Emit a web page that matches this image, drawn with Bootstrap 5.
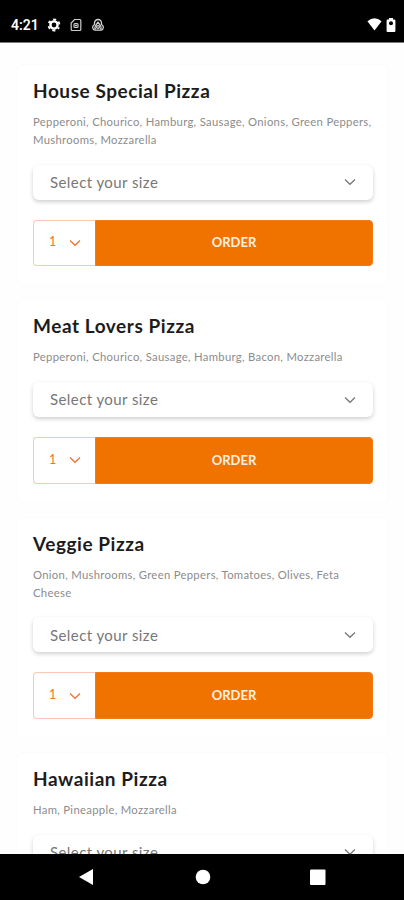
<!DOCTYPE html>
<html lang="en">
<head>
<meta charset="utf-8">
<meta name="viewport" content="width=device-width, initial-scale=1">
<title>Pizza menu</title>
<link href="https://cdn.jsdelivr.net/npm/bootstrap@5.3.0/dist/css/bootstrap.min.css" rel="stylesheet">
<style>
  body { font-family: Lato, "Open Sans", sans-serif; background: #fefefe; }
  .screen { height: 900px; }
  .status-bar { height: 43px; padding: 7px 8px 0 11px; border-bottom: 1px solid #777; font: 600 14px Roboto, sans-serif; }
  .menu-list { padding: 21px 15px 0 17px; gap: 14px; }
  .menu-item { padding: 15px 15px 18.2px; border: 1px solid #fcfcfc; border-radius: 6px; background: #fff; }
  .item-title { font-size: 19px; line-height: 22px; font-weight: 700; color: #1c1c1c; letter-spacing: .55px; margin: 0 0 11px; }
  .item-desc { font-size: 11.3px; line-height: 17.8px; color: #8c8c8c; letter-spacing: .3px; margin: 0 0 16px; }
  .size-select { height: 35px; padding: 0 17px; border-radius: 6px; font-size: 15px; color: #777; letter-spacing: .42px; background: #fff; box-shadow: 0 2px 4px rgba(0,0,0,.19); margin-bottom: 20px; }
  .order-row { height: 46.5px; }
  .qty { width: 62px; border: 1px solid #fbc9b2; border-right: 0; border-radius: 4px 0 0 4px; color: #ef7430; font-size: 12.5px; padding: 0 14px 0 15px; }
  .order-btn { --bs-btn-bg: #f07300; --bs-btn-color: #fff0e2; --bs-btn-border-color: #f27b18; --bs-btn-hover-bg: #dc6900; --bs-btn-hover-color: #fff; border-radius: 0 4px 4px 0; font-size: 13px; font-weight: 700; }
  .nav-bar { height: 46px; }
</style>
<script src="https://cdn.jsdelivr.net/npm/bootstrap@5.3.0/dist/js/bootstrap.bundle.min.js"></script>
</head>
<body>
<svg class="d-none">
  <symbol id="chevron" viewBox="0 0 12 8"><path d="M1 1.500 6 6.300 11 1.500" fill="none" stroke="currentColor" stroke-width="1.250"/></symbol>
</svg>
<div class="screen d-flex flex-column overflow-hidden">
  <header class="status-bar bg-black text-white d-flex align-items-center flex-shrink-0">
    <span class="clock">4:21</span>
    <svg class="ms-2" width="14" height="14" viewBox="0 0 14 14"><g fill="none" stroke="#fff"><circle cx="7" cy="7" r="3.600" stroke-width="2.400"/><circle cx="7" cy="7" r="5.500" stroke-width="1.800" stroke-dasharray="2.900 2.860" stroke-dashoffset="1.450" transform="rotate(30 7 7)"/></g></svg>
    <svg class="ms-2" width="14" height="14" viewBox="0 0 14 14"><g fill="none" stroke="#ccc" stroke-width="1.200"><path d="M5.500 1.500h5.300a1 1 0 0 1 1 1v9a1 1 0 0 1-1 1H3.200a1 1 0 0 1-1-1V5z"/><rect x="5" y="5.500" width="4" height="4" rx="1"/></g><circle cx="7" cy="7.500" r="1" fill="#ddd"/></svg>
    <svg class="ms-2" width="14" height="14" viewBox="0 0 14 14"><g fill="none" stroke="#d5d5d5" stroke-width="1.300" stroke-linejoin="round"><path d="M3.500 6.500V5a3.500 3.500 0 0 1 7 0v1.500a3 3 0 0 1-.5 5.700H4a3 3 0 0 1-.5-5.700z"/><path d="M4.500 11.500a3 3 0 0 1-.2-3.300L7 4.200l2.700 4a3 3 0 0 1-.2 3.300"/><circle cx="7" cy="9" r="1.400"/></g></svg>
    <svg class="ms-auto" width="15" height="13" viewBox="0 0 15 13"><path d="M.4 3.300Q7.500-2.600 14.600 3.300L7.500 12.500z" fill="#fff"/></svg>
    <svg class="ms-1" width="10" height="14" viewBox="0 0 10 14"><path d="M3 0h4v1.400h1.400q1 0 1 1V13q0 1-1 1H1.600q-1 0-1-1V2.400q0-1 1-1H3z" fill="#fff"/><circle cx="5" cy="5.300" r="2" fill="#000"/></svg>
  </header>

  <main class="menu-list d-flex flex-column flex-grow-1 overflow-hidden">
    <article class="menu-item flex-shrink-0">
      <h2 class="item-title">House Special Pizza</h2>
      <p class="item-desc">Pepperoni, Chourico, Hamburg, Sausage, Onions, Green Peppers,<br>Mushrooms, Mozzarella</p>
      <div class="size-select d-flex align-items-center justify-content-between"><span>Select your size</span><svg width="12" height="8"><use href="#chevron"/></svg></div>
      <div class="order-row d-flex"><div class="qty d-flex align-items-center justify-content-between"><span>1</span><svg width="12" height="8"><use href="#chevron"/></svg></div><button class="btn order-btn flex-grow-1 py-0" type="button">ORDER</button></div>
    </article>
    <article class="menu-item flex-shrink-0">
      <h2 class="item-title">Meat Lovers Pizza</h2>
      <p class="item-desc">Pepperoni, Chourico, Sausage, Hamburg, Bacon, Mozzarella</p>
      <div class="size-select d-flex align-items-center justify-content-between"><span>Select your size</span><svg width="12" height="8"><use href="#chevron"/></svg></div>
      <div class="order-row d-flex"><div class="qty d-flex align-items-center justify-content-between"><span>1</span><svg width="12" height="8"><use href="#chevron"/></svg></div><button class="btn order-btn flex-grow-1 py-0" type="button">ORDER</button></div>
    </article>
    <article class="menu-item flex-shrink-0">
      <h2 class="item-title">Veggie Pizza</h2>
      <p class="item-desc">Onion, Mushrooms, Green Peppers, Tomatoes, Olives, Feta<br>Cheese</p>
      <div class="size-select d-flex align-items-center justify-content-between"><span>Select your size</span><svg width="12" height="8"><use href="#chevron"/></svg></div>
      <div class="order-row d-flex"><div class="qty d-flex align-items-center justify-content-between"><span>1</span><svg width="12" height="8"><use href="#chevron"/></svg></div><button class="btn order-btn flex-grow-1 py-0" type="button">ORDER</button></div>
    </article>
    <article class="menu-item flex-shrink-0">
      <h2 class="item-title">Hawaiian Pizza</h2>
      <p class="item-desc">Ham, Pineapple, Mozzarella</p>
      <div class="size-select d-flex align-items-center justify-content-between"><span>Select your size</span><svg width="12" height="8"><use href="#chevron"/></svg></div>
    </article>
  </main>

  <footer class="nav-bar bg-black flex-shrink-0">
    <svg class="d-block" width="404" height="46" viewBox="0 0 404 46" fill="#fff"><path d="M79 23 93 15v16z"/><circle cx="203" cy="23" r="7.300"/><rect x="310" y="15.500" width="15.500" height="15.500" rx="1"/></svg>
  </footer>
</div>
</body>
</html>
